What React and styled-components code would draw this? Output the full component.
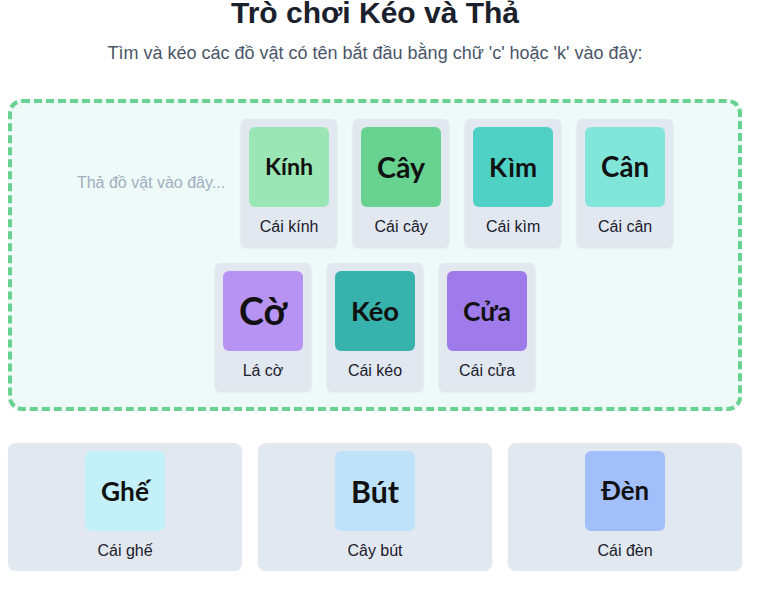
import React, { useLayoutEffect, useRef, useState } from "react";
import styled, { createGlobalStyle } from "styled-components";

const GlobalStyle = createGlobalStyle`
  body {
    margin: 0;
    background: #ffffff;
    font-family: "Liberation Sans", Arial, sans-serif;
    color: #1a202c;
  }
`;

//Data
const dropped = [
  { word: "Kính", label: "Cái kính", color: "#9ae6b4" },
  { word: "Cây", label: "Cái cây", color: "#68d391" },
  { word: "Kìm", label: "Cái kìm", color: "#4fd1c5" },
  { word: "Cân", label: "Cái cân", color: "#81e6d9" },
  { word: "Cờ", label: "Lá cờ", color: "#b794f4" },
  { word: "Kéo", label: "Cái kéo", color: "#38b2ac" },
  { word: "Cửa", label: "Cái cửa", color: "#9f7aea" },
];

const remaining = [
  { word: "Ghế", label: "Cái ghế", color: "#c4f1f9" },
  { word: "Bút", label: "Cây bút", color: "#bee3f8" },
  { word: "Đèn", label: "Cái đèn", color: "#a3bffa" },
];

//Scales the word so it fills a fixed width inside its tile
const FitWord = ({ children, width = 48 }) => {
  const ref = useRef(null);
  const [size, setSize] = useState(28);
  useLayoutEffect(() => {
    const measure = () => {
      const el = ref.current;
      if (!el) return;
      const w = el.getBoundingClientRect().width;
      const current = parseFloat(window.getComputedStyle(el).fontSize);
      if (w > 0) setSize((current * width) / w);
    };
    measure();
    if (document.fonts && document.fonts.ready) document.fonts.ready.then(measure);
  }, [children, width]);
  return (
    <StyledWord ref={ref} style={{ fontSize: `${size}px` }}>
      {children}
    </StyledWord>
  );
};

const Tile = ({ item }) => (
  <StyledTile $color={item.color}>
    <FitWord>{item.word}</FitWord>
  </StyledTile>
);

const App = () => {
  return (
    <>
      <GlobalStyle />
      <StyledPage>
        <StyledTitle>Trò chơi Kéo và Thả</StyledTitle>
        <StyledSubtitle>
          Tìm và kéo các đồ vật có tên bắt đầu bằng chữ 'c' hoặc 'k' vào đây:
        </StyledSubtitle>
        <StyledDropZone>
          <StyledPlaceholder>Thả đồ vật vào đây...</StyledPlaceholder>
          {dropped.map((item) => (
            <StyledItem key={item.word}>
              <Tile item={item} />
              <StyledLabel>{item.label}</StyledLabel>
            </StyledItem>
          ))}
        </StyledDropZone>
        <StyledShelf>
          {remaining.map((item) => (
            <StyledSlot key={item.word}>
              <Tile item={item} />
              <StyledLabel>{item.label}</StyledLabel>
            </StyledSlot>
          ))}
        </StyledShelf>
      </StyledPage>
    </>
  );
};

const StyledPage = styled.div`
  width: 734px;
  margin-left: 8px;
`;

const StyledTitle = styled.h1`
  margin: -5px 0 0;
  font-size: 30px;
  line-height: 36px;
  font-weight: 700;
  text-align: center;
  color: #1a202c;
`;

const StyledSubtitle = styled.p`
  margin: 9px 0 0;
  font-size: 18px;
  line-height: 27px;
  text-align: center;
  color: #4a5568;
`;

const StyledDropZone = styled.div`
  margin-top: 32px;
  padding: 16px;
  border: 4px dashed #68d391;
  border-radius: 14px;
  background: #eefaf7;
  display: flex;
  flex-wrap: wrap;
  justify-content: center;
  align-items: center;
  gap: 16px;
`;

const StyledPlaceholder = styled.span`
  font-size: 16px;
  line-height: 24px;
  color: #a0aec0;
`;

const StyledItem = styled.div`
  width: 96px;
  box-sizing: border-box;
  padding: 8px;
  border-radius: 6px;
  background: #e2e8f0;
  box-shadow: 0 1px 3px rgba(0, 0, 0, 0.08), 0 1px 2px rgba(0, 0, 0, 0.04);
  display: flex;
  flex-direction: column;
  align-items: center;
`;

const StyledTile = styled.div`
  width: 80px;
  height: 80px;
  border-radius: 6px;
  background: ${(p) => p.$color};
  display: flex;
  align-items: center;
  justify-content: center;
`;

const StyledWord = styled.span`
  font-family: Lato, "Liberation Sans", sans-serif;
  font-weight: 700;
  line-height: 1;
  color: #111111;
  white-space: nowrap;
`;

const StyledLabel = styled.div`
  margin-top: 8px;
  font-size: 16px;
  line-height: 24px;
  color: #1a202c;
  text-align: center;
`;

const StyledShelf = styled.div`
  margin-top: 32px;
  display: grid;
  grid-template-columns: repeat(3, 1fr);
  gap: 16px;
`;

const StyledSlot = styled.div`
  padding: 8px;
  border-radius: 8px;
  background: #e2e8f0;
  box-shadow: 0 1px 2px rgba(0, 0, 0, 0.05);
  display: flex;
  flex-direction: column;
  align-items: center;
`;

export default App;
